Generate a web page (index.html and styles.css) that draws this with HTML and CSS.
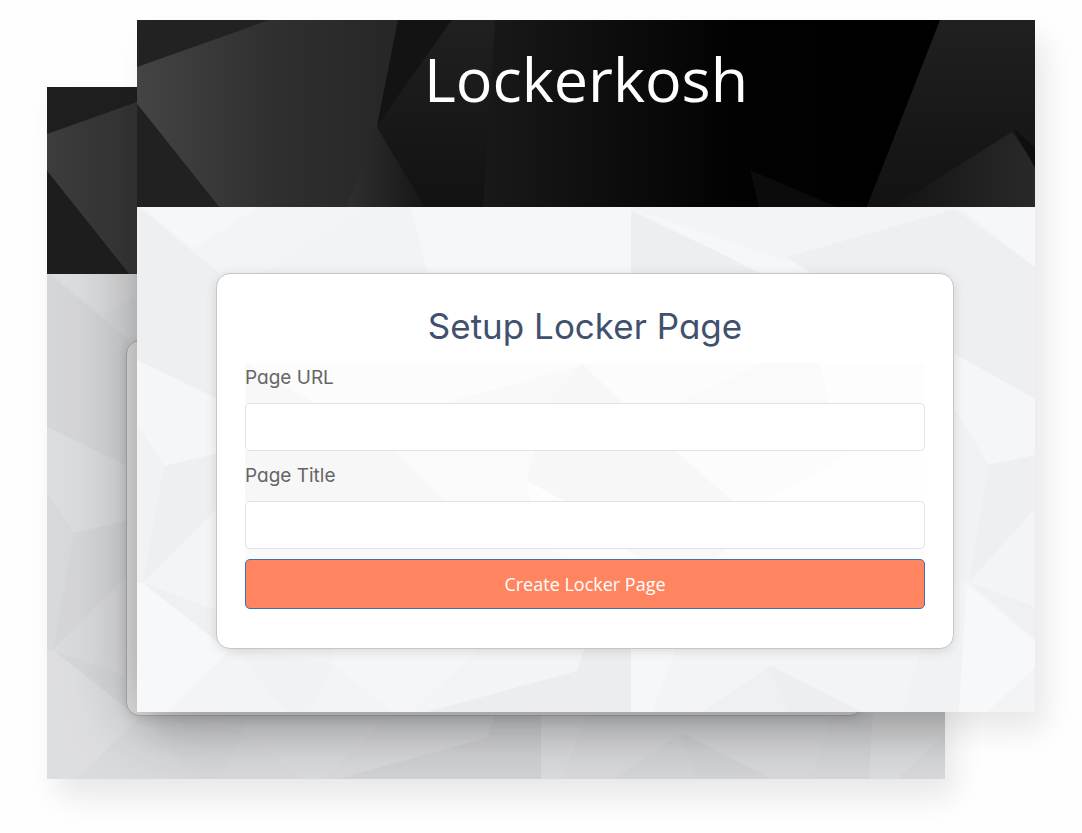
FILE: index.html
```
<!DOCTYPE html>
<html lang="en">
<head>
    <meta charset="UTF-8">
    <meta name="viewport" content="width=device-width, initial-scale=1.0">
    <title>Lockerkosh</title>
    <link rel="stylesheet" href="styles.css">
</head>
<body>

    <!-- Shared facet patterns -->
    <svg class="defs" aria-hidden="true">
        <defs>
            <linearGradient id="slab">
                <stop offset="0" stop-color="#444"/>
                <stop offset="0.5" stop-color="#303030"/>
                <stop offset="1" stop-color="#262626"/>
            </linearGradient>
            <linearGradient id="night">
                <stop offset="0" stop-color="#191919"/>
                <stop offset="0.55" stop-color="#020202"/>
                <stop offset="1" stop-color="#000"/>
            </linearGradient>
            <linearGradient id="fall" x1="0" y1="0" x2="0" y2="1">
                <stop offset="0" stop-color="#202020"/>
                <stop offset="1" stop-color="#121212"/>
            </linearGradient>
            <linearGradient id="peak">
                <stop offset="0" stop-color="#303030"/>
                <stop offset="1" stop-color="#161616"/>
            </linearGradient>
            <linearGradient id="ridge">
                <stop offset="0" stop-color="#131313"/>
                <stop offset="1" stop-color="#292929"/>
            </linearGradient>
        </defs>
        <symbol id="dark-facets" viewBox="0 0 898 187" preserveAspectRatio="none">
            <rect width="898" height="187" fill="#1c1c1c"/>
            <polygon points="0,0 132,0 0,47" fill="#222"/>
            <polygon points="0,47 132,0 262,0 241,106 209,187 82,187 0,84" fill="url(#slab)"/>
            <polygon points="0,84 82,187 0,187" fill="#212121"/>
            <polygon points="261,0 315,0 240,106" fill="#131313"/>
            <polygon points="315,0 360,0 348,187 285,187 240,106" fill="url(#fall)"/>
            <polygon points="240,108 209,187 288,187" fill="url(#peak)"/>
            <polygon points="358,0 804,0 730,187 346,187" fill="url(#night)"/>
            <polygon points="613,150 700,187 622,187" fill="#0b0b0b"/>
            <polygon points="846,0 898,0 898,187 730,187 803,0" fill="url(#fall)"/>
            <polygon points="875,112 898,145 898,187 755,187" fill="url(#ridge)"/>
            <polygon points="876,108 898,128 898,148" fill="#0e0e0e"/>
        </symbol>
        <symbol id="light-facets" viewBox="0 0 898 505" preserveAspectRatio="none">
            <rect width="898" height="505" fill="#f3f4f6"/>
            <polygon points="0,0 5,3 82,66 82,192 0,153" fill="#eeeff1"/>
            <polygon points="5,0 120,0 56,42" fill="#f6f7f9"/>
            <polygon points="230,0 274,0 292,70 120,70" fill="#f2f3f5"/>
            <polygon points="274,0 494,0 494,70 292,70" fill="#f6f7f9"/>
            <polygon points="494,4 634,70 494,70" fill="#edeef0"/>
            <polygon points="496,2 696,70 630,70" fill="#f6f7f9"/>
            <polygon points="650,50 818,2 898,60 898,192 816,146 816,70 680,70" fill="#eeeff1"/>
            <polygon points="823,0 898,0 898,60" fill="#f6f7f9"/>
            <polygon points="0,153 82,194 82,246 27,259 0,218" fill="#f5f6f8"/>
            <polygon points="0,218 27,259 6,376 0,376" fill="#f1f2f4"/>
            <polygon points="27,259 82,246 82,300 6,376" fill="#eeeff1"/>
            <polygon points="6,376 82,404 82,436" fill="#eff0f2"/>
            <polygon points="0,376 6,376 92,444 30,505 0,505" fill="#f7f8fa"/>
            <polygon points="90,435 196,458 172,505 150,505" fill="#f1f2f4"/>
            <polygon points="196,440 345,440 275,505 255,505 196,458" fill="#f5f6f8"/>
            <polygon points="345,440 448,440 440,464 290,505 275,505" fill="#f3f4f6"/>
            <polygon points="290,505 440,464 448,440 494,440 494,505" fill="#ecedef"/>
            <polygon points="494,440 540,440 515,505 494,505" fill="#f6f7f9"/>
            <polygon points="565,505 634,459 725,505" fill="#eff0f2"/>
            <polygon points="634,459 725,505 650,505" fill="#edeef0"/>
            <polygon points="785,440 826,440 822,505 765,505" fill="#f1f2f4"/>
            <polygon points="816,146 898,192 898,248 852,258 816,200" fill="#f5f6f8"/>
            <polygon points="816,200 852,258 832,375 816,375" fill="#f1f2f4"/>
            <polygon points="852,258 898,248 898,302 832,375" fill="#eeeff1"/>
            <polygon points="832,375 898,400 898,432" fill="#eff0f2"/>
            <polygon points="830,377 898,435 898,460 850,505 822,505" fill="#f7f8fa"/>
        </symbol>
    </svg>

    <main class="stage">
        <div class="page page-back" aria-hidden="true">
            <div class="page-header">
                <svg class="facets"><use href="#dark-facets"/></svg>
            </div>
            <div class="page-body">
                <svg class="facets"><use href="#light-facets"/></svg>
                <div class="card"></div>
            </div>
        </div>

        <div class="page page-front">
            <header class="page-header">
                <svg class="facets" aria-hidden="true"><use href="#dark-facets"/></svg>
                <h1>Lockerkosh</h1>
            </header>
            <div class="page-body">
                <svg class="facets" aria-hidden="true"><use href="#light-facets"/></svg>
                <section class="card">
                    <h2>Setup Locker Page</h2>
                    <form class="setup-form">
                        <svg class="facets" viewBox="0 0 680 246" preserveAspectRatio="none" aria-hidden="true">
                            <rect width="680" height="220" fill="#fcfcfc"/>
                            <polygon points="0,0 70,40 0,40" fill="#f8f8f8"/>
                            <polygon points="200,40 338,2 378,40" fill="#f9f9f9"/>
                            <polygon points="338,2 378,40 300,40" fill="#f7f7f7"/>
                            <polygon points="520,0 574,0 584,40 430,40" fill="#fafafa"/>
                            <polygon points="584,40 574,0 680,0 680,40" fill="#fdfdfd"/>
                            <polygon points="0,88 150,88 200,138 0,138" fill="#f7f7f7"/>
                            <polygon points="150,88 290,88 310,138 200,138" fill="#fafafa"/>
                            <polygon points="290,88 430,88 488,138 310,138 282,118" fill="#f7f7f7"/>
                            <polygon points="282,118 320,138 285,138" fill="#fdfdfd"/>
                            <polygon points="610,88 680,88 680,138 520,138" fill="#fefefe"/>
                            <polygon points="0,186 310,186 320,197 0,197" fill="#fafafa"/>
                            <polygon points="380,186 480,186 470,197 400,197" fill="#f8f8f8"/>
                        </svg>
                        <div class="field">
                            <label for="page-url">Page URL</label>
                            <input type="text" id="page-url">
                        </div>
                        <div class="field">
                            <label for="page-title">Page Title</label>
                            <input type="text" id="page-title">
                        </div>
                        <button type="button">Create Locker Page</button>
                    </form>
                </section>
            </div>
        </div>
    </main>

</body>
</html>
```
FILE: styles.css
```
* {
    box-sizing: border-box;
}
body {
    margin: 0;
    background-color: #fefefe;
    font-family: "Open Sans", "Noto Sans", sans-serif;
}
.defs {
    position: absolute;
    width: 0;
    height: 0;
}

/* the two pages share one grid cell and are shifted by margins */
.stage {
    display: grid;
    padding: 20px 47px 54px;
}
.page {
    grid-area: 1 / 1;
    position: relative;
    display: flex;
    flex-direction: column;
    box-shadow: 10px 18px 28px rgba(0, 0, 0, 0.09);
}
.page-back {
    margin: 67px 90px 0 0;
}
.page-front {
    margin: 0 0 67px 90px;
}
/* dims the back page */
.page-back::after {
    content: "";
    position: absolute;
    inset: 0;
    background-color: rgba(0, 0, 0, 0.1);
}
/* shade of the front page on the back one */
.page-back .page-body::after {
    content: "";
    position: absolute;
    inset: -254px -90px 67px 90px;
    box-shadow: 0 10px 70px rgba(0, 0, 0, 0.32);
}

.facets {
    position: absolute;
    inset: 0;
    width: 100%;
    height: 100%;
}
.page-header {
    position: relative;
    min-height: 187px;
    padding-top: 12px;
    background-color: #1c1c1c;
    text-align: center;
}
h1 {
    position: relative;
    margin: 0;
    color: #fff;
    font-size: 61px;
    font-weight: 400;
    line-height: 94px;
}
.page-body {
    position: relative;
    flex: 1;
    padding: 66px 81px 63px 79px;
    overflow: hidden;
    background-color: #f3f4f6;
}
.card {
    position: relative;
    min-height: 376px;
    padding: 25px 28px 39px;
    border: 1px solid #c6c6ca;
    border-radius: 14px;
    background-color: #fff;
    box-shadow: 0 2px 12px rgba(0, 0, 0, 0.12);
}
.card,
.page-back .card {
    padding-left: 28px;
}
h2 {
    margin: 0 0 10px;
    color: #40506d;
    font-family: Inter, sans-serif;
    font-feature-settings: "cv11";
    font-size: 35px;
    font-weight: 400;
    line-height: 54px;
    text-align: center;
}
.setup-form {
    position: relative;
}
.field {
    position: relative;
    margin-bottom: 10px;
}
label {
    display: block;
    margin-bottom: 10px;
    color: #666;
    font-family: Inter, sans-serif;
    font-feature-settings: "cv11";
    font-size: 19px;
    line-height: 30px;
}
input[type="text"] {
    display: block;
    width: 100%;
    height: 48px;
    padding: 0 12px;
    border: 1px solid #e1e2e6;
    border-radius: 5px;
    background-color: #fff;
    font-size: 18px;
}
button {
    position: relative;
    display: block;
    width: 100%;
    height: 50px;
    border: 1px solid #3f6fb5;
    border-radius: 5px;
    background-color: #ff8560;
    color: #fff;
    font-family: "Open Sans", sans-serif;
    font-size: 18px;
    cursor: pointer;
}
button:hover {
    background-color: #f97a54;
}
```
